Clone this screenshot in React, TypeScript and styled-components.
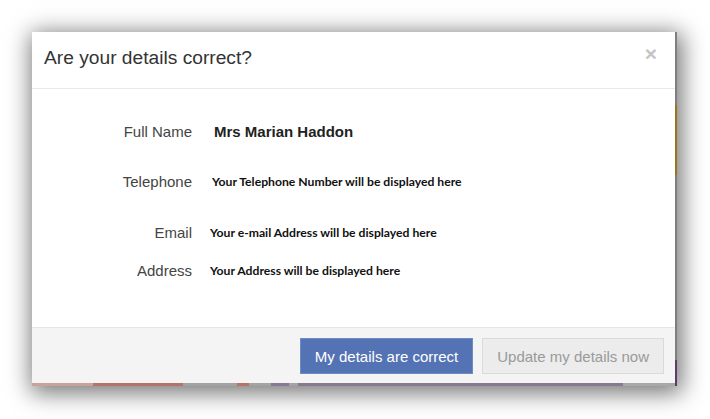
import styled, { createGlobalStyle } from "styled-components";

const GlobalStyle = createGlobalStyle`
  html, body {
    margin: 0;
    background: #ffffff;
  }
  body {
    font-family: "Liberation Sans", Arial, sans-serif;
  }
`;

const Page = styled.div`
  width: 710px;
  height: 419px;
  padding: 32px 0 0 32px;
  box-sizing: border-box;
`;

// the cropped page behind the modal peeks out at the right and bottom edge
const Frame = styled.div`
  display: grid;
  grid-template-columns: 643px 2px;
  grid-template-rows: 351px 3px;
  width: 645px;
  height: 354px;
  background: #8a8a8a;
  box-shadow: 2px 4px 22px 3px rgba(0, 0, 0, 0.55);
`;

const Modal = styled.div`
  display: flex;
  flex-direction: column;
  background: #fff;
`;

const Header = styled.div`
  display: flex;
  justify-content: space-between;
  align-items: flex-start;
  height: 57px;
  padding: 15px 12px 0 12px;
  box-sizing: border-box;
  border-bottom: 1px solid #e8e8e8;
`;

const Title = styled.h4`
  margin: 0;
  font-size: 19.2px;
  font-weight: 400;
  color: #333;
  line-height: 22px;
`;

const Close = styled.button`
  border: 0;
  background: transparent;
  padding: 0;
  margin: 0 6px 0 0;
  font-family: "Liberation Sans", Arial, sans-serif;
  font-size: 21px;
  font-weight: 700;
  line-height: 14px;
  color: #c4c4c4;
  cursor: pointer;
`;

const Body = styled.div`
  flex: 1;
  display: flex;
  flex-direction: column;
  padding-top: 30px;
`;

const Row = styled.div<{ $space: number }>`
  display: grid;
  grid-template-columns: 160px 1fr;
  column-gap: 20px;
  align-items: center;
  height: 24px;
  margin-top: ${(p) => p.$space}px;
`;

const Label = styled.div`
  text-align: right;
  font-size: 15px;
  color: #444;
`;

const Name = styled.div`
  padding-left: 2px;
  font-size: 15px;
  font-weight: 700;
  color: #222;
`;

const Value = styled.div<{ $shift: number }>`
  margin-left: ${(p) => p.$shift}px;
  font-family: Lato, "Open Sans", sans-serif;
  font-size: 12.2px;
  font-weight: 700;
  color: #111;
`;

const Footer = styled.div`
  display: flex;
  justify-content: flex-end;
  gap: 9px;
  height: 56px;
  padding: 10px 11px 0 0;
  box-sizing: border-box;
  background: #f4f4f4;
  border-top: 1px solid #e6e6e6;
`;

const Button = styled.button<{ $primary?: boolean }>`
  height: 36px;
  padding: 0 14px;
  font-family: "Liberation Sans", Arial, sans-serif;
  font-size: 15px;
  border: 1px solid ${(p) => (p.$primary ? "#6f8bc4" : "#dadada")};
  background: ${(p) => (p.$primary ? "#5373b4" : "#ececec")};
  color: ${(p) => (p.$primary ? "#fff" : "#9a9a9a")};
  cursor: pointer;
`;

const SideStrip = styled.div`
  grid-column: 2;
  grid-row: 1 / span 2;
  display: flex;
  flex-direction: column;
`;

const BottomStrip = styled.div`
  display: flex;
`;

const Seg = styled.div<{ $c: string }>`
  background: ${(p) => p.$c};
`;

const sideSegs: [number, string][] = [
  [73, "#7f7f7f"],
  [70, "#9a7418"],
  [185, "#7f7f7f"],
  [26, "#5b3d66"],
];

const bottomSegs: [number, string][] = [
  [61, "#c9a29c"],
  [90, "#b5736a"],
  [54, "#a3a3a3"],
  [12, "#b5736a"],
  [22, "#a3a3a3"],
  [18, "#8a7896"],
  [9, "#a3a3a3"],
  [325, "#8a7890"],
  [52, "#a8a8a8"],
];

const details = [
  { label: "Telephone", value: "Your Telephone Number will be displayed here", space: 26, shift: 0 },
  { label: "Email", value: "Your e-mail Address will be displayed here", space: 27, shift: -2 },
  { label: "Address", value: "Your Address will be displayed here", space: 14, shift: -2 },
];

const App = () => {
  return (
    <Page>
      <GlobalStyle />
      <Frame>
        <Modal>
          <Header>
            <Title>Are your details correct?</Title>
            <Close>×</Close>
          </Header>
          <Body>
            <Row $space={0}>
              <Label>Full Name</Label>
              <Name>Mrs Marian Haddon</Name>
            </Row>
            {details.map((d) => (
              <Row $space={d.space} key={d.label}>
                <Label>{d.label}</Label>
                <Value $shift={d.shift}>{d.value}</Value>
              </Row>
            ))}
          </Body>
          <Footer>
            <Button $primary>My details are correct</Button>
            <Button>Update my details now</Button>
          </Footer>
        </Modal>
        <SideStrip>
          {sideSegs.map(([h, c], i) => (
            <Seg $c={c} style={{ height: h }} key={i} />
          ))}
        </SideStrip>
        <BottomStrip>
          {bottomSegs.map(([w, c], i) => (
            <Seg $c={c} style={{ width: w }} key={i} />
          ))}
        </BottomStrip>
      </Frame>
    </Page>
  );
};

export default App;
